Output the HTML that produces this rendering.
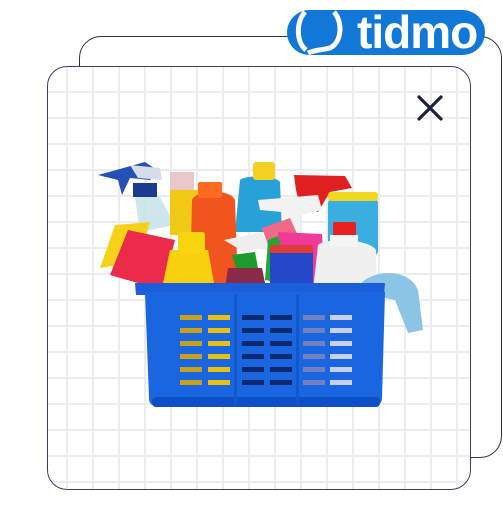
<!DOCTYPE html>
<html><head><meta charset="utf-8"><style>
html,body{margin:0;padding:0;background:#fff;width:503px;height:526px;overflow:hidden;position:relative;font-family:"Liberation Sans",sans-serif}
.back{position:absolute;left:79px;top:36px;width:421px;height:420px;border:1.5px solid #2a3048;border-radius:22px;background:#fff}
.main{position:absolute;left:47px;top:66px;width:422px;height:422px;border:1.5px solid #3a4060;border-radius:20px;
background-color:#fff;
background-image:linear-gradient(to right,#ececef 2px,transparent 2px),linear-gradient(to bottom,#ececef 2px,transparent 2px);
background-size:26px 26px;background-position:18px 24px}
.pill{position:absolute;left:287px;top:10px;width:198px;height:45px;border-radius:23px;background:#1278d8}
.pill span{position:absolute;left:70px;top:-5px;color:#fff;font-weight:bold;font-size:46px;letter-spacing:-1px}
svg{position:absolute;left:0;top:0}
</style></head><body>
<div class="back"></div>
<div class="main"></div>
<div class="pill"><span>tidmo</span></div>
<svg width="503" height="526" viewBox="0 0 503 526">
<path d="M305 12 C296 22 296 42 306 50" fill="none" stroke="#fff" stroke-width="5"/>
<path d="M334 12 C343 22 342 42 330 48 C322 50 314 50 308 53" fill="none" stroke="#fff" stroke-width="5"/>
<path d="M419 97 L441 119 M441 97 L419 119" stroke="#1a2240" stroke-width="3.2" stroke-linecap="round"/>
<path d="M98 175 L145 162 L160 172 L150 180 L130 178 L122 195 L118 180 Z" fill="#2450b8"/>
<path d="M130 165 L160 168 L162 180 L138 178Z" fill="#d8dce8"/>
<rect x="133" y="183" width="24" height="14" fill="#1c3a90"/>
<path d="M135 197 L160 197 L175 225 L140 232 Z" fill="#c8e4ea" opacity=".9"/>
<path d="M240 180 C245 175 275 175 280 182 L282 232 L235 232 Z" fill="#2aa0d8"/>
<rect x="253" y="162" width="22" height="18" rx="3" fill="#f4d020"/>
<path d="M294 175 L345 176 L352 188 L330 192 L318 212 L300 206 L296 190 Z" fill="#e02020"/>
<rect x="170" y="190" width="28" height="45" fill="#f2c817"/>
<rect x="170" y="172" width="24" height="18" fill="#e8c8c8"/>
<path d="M192 200 C195 190 230 188 235 200 L238 288 L190 288 Z" fill="#f25420"/>
<rect x="198" y="182" width="24" height="16" rx="2" fill="#ff6a20"/>
<rect x="328" y="198" width="50" height="58" rx="5" fill="#3aaee0"/>
<rect x="328" y="192" width="50" height="9" rx="3" fill="#f0d820"/>
<path d="M258 200 L318 195 L322 210 L300 215 L300 232 L285 232 L282 212 L260 210 Z" fill="#f2f2f2"/>
<path d="M262 228 L290 218 L300 240 L268 245 Z" fill="#f06a88"/>
<path d="M278 232 L322 234 L325 290 L280 290 Z" fill="#f03a9a"/>
<path d="M100 268 L115 225 L150 222 L138 262 Z" fill="#f5d21a"/>
<path d="M110 275 L128 230 L175 240 L162 290 Z" fill="#ec2a4a"/>
<path d="M170 250 L208 250 L215 288 L162 288 Z" fill="#f8d010"/>
<rect x="178" y="232" width="27" height="22" rx="3" fill="#f7d60f"/>
<path d="M224 240 L262 232 L268 246 L244 252 Z" fill="#eeeeee"/>
<path d="M232 255 L255 252 L258 268 L236 268 Z" fill="#1c9a2a"/>
<path d="M268 240 L278 236 L282 250 L272 262 L275 282 L265 280 Z" fill="#20a830"/>
<path d="M228 268 L262 268 L266 288 L225 288 Z" fill="#8a2a48"/>
<rect x="270" y="250" width="43" height="38" rx="4" fill="#2448c8"/>
<rect x="270" y="245" width="43" height="8" rx="2" fill="#e03a3a"/>
<path d="M318 245 C325 238 368 238 376 250 L377 290 L313 290 Z" fill="#f0f0f0"/>
<rect x="333" y="222" width="23" height="15" rx="2" fill="#e82020"/>
<rect x="330" y="235" width="28" height="12" fill="#f4f4f4"/>
<path d="M362 282 C380 268 410 270 418 290 L423 330 L408 333 L395 300 L370 295 Z" fill="#8cc4e6"/>
<path d="M135 283 L385 283 L384 295 L136 295 Z" fill="#1a5ed8"/>
<path d="M145 292 L385 292 L382 398 C382 404 378 406 372 406 L158 406 C152 406 149 404 149 398 Z" fill="#1a66e0"/>
<rect x="152" y="397" width="228" height="10" rx="4" fill="#0d4fc4"/>
<g fill="#0c2a70">
<g><rect x="180" y="315" width="22" height="5" fill="#c8a020"/><rect x="208" y="315" width="22" height="5" fill="#e8c010"/><rect x="242" y="315" width="22" height="5"/><rect x="270" y="315" width="22" height="5"/><rect x="303" y="315" width="22" height="5" fill="#7080c0"/><rect x="330" y="315" width="22" height="5" fill="#c8d0f0"/></g>
<g transform="translate(0,13)"><rect x="180" y="315" width="22" height="5" fill="#c8a020"/><rect x="208" y="315" width="22" height="5" fill="#e8c010"/><rect x="242" y="315" width="22" height="5"/><rect x="270" y="315" width="22" height="5"/><rect x="303" y="315" width="22" height="5" fill="#7080c0"/><rect x="330" y="315" width="22" height="5" fill="#c8d0f0"/></g>
<g transform="translate(0,26)"><rect x="180" y="315" width="22" height="5" fill="#c8a020"/><rect x="208" y="315" width="22" height="5" fill="#e8c010"/><rect x="242" y="315" width="22" height="5"/><rect x="270" y="315" width="22" height="5"/><rect x="303" y="315" width="22" height="5" fill="#7080c0"/><rect x="330" y="315" width="22" height="5" fill="#c8d0f0"/></g>
<g transform="translate(0,39)"><rect x="180" y="315" width="22" height="5" fill="#c8a020"/><rect x="208" y="315" width="22" height="5" fill="#e8c010"/><rect x="242" y="315" width="22" height="5"/><rect x="270" y="315" width="22" height="5"/><rect x="303" y="315" width="22" height="5" fill="#7080c0"/><rect x="330" y="315" width="22" height="5" fill="#c8d0f0"/></g>
<g transform="translate(0,52)"><rect x="180" y="315" width="22" height="5" fill="#c8a020"/><rect x="208" y="315" width="22" height="5" fill="#e8c010"/><rect x="242" y="315" width="22" height="5"/><rect x="270" y="315" width="22" height="5"/><rect x="303" y="315" width="22" height="5" fill="#7080c0"/><rect x="330" y="315" width="22" height="5" fill="#c8d0f0"/></g>
<g transform="translate(0,65)"><rect x="180" y="315" width="22" height="5" fill="#c8a020"/><rect x="208" y="315" width="22" height="5" fill="#e8c010"/><rect x="242" y="315" width="22" height="5"/><rect x="270" y="315" width="22" height="5"/><rect x="303" y="315" width="22" height="5" fill="#7080c0"/><rect x="330" y="315" width="22" height="5" fill="#c8d0f0"/></g>
</g>
<rect x="234" y="295" width="3" height="110" fill="#1258cc"/>
<rect x="296" y="295" width="3" height="110" fill="#1258cc"/>
</svg>
</body></html>
